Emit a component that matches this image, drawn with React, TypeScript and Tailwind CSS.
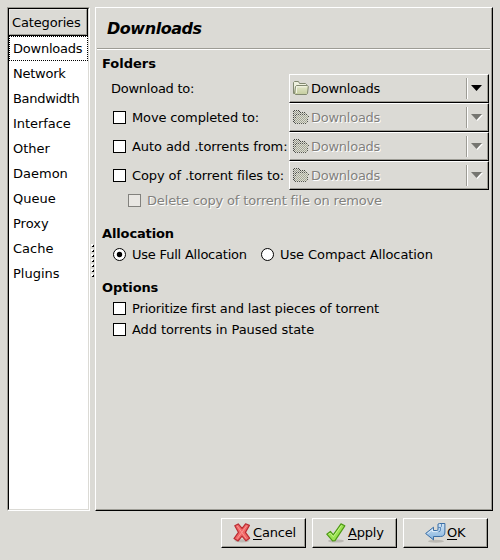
import React from "react";

const categories = [
  { name: "Downloads", spacing: "tracking-[-0.22px]" },
  { name: "Network", spacing: "tracking-[-0.25px]" },
  { name: "Bandwidth", spacing: "tracking-[-0.3px]" },
  { name: "Interface", spacing: "tracking-[-0.05px]" },
  { name: "Other", spacing: "tracking-normal" },
  { name: "Daemon", spacing: "tracking-normal" },
  { name: "Queue", spacing: "tracking-normal" },
  { name: "Proxy", spacing: "tracking-normal" },
  { name: "Cache", spacing: "tracking-normal" },
  { name: "Plugins", spacing: "tracking-normal" },
];

const embossed = "text-[#82817d] [text-shadow:1px_1px_0_#fff]";

function Check({ disabled = false }: { disabled?: boolean }) {
  return (
    <span
      className={
        "block h-[13px] w-[13px] shrink-0 border " +
        (disabled ? "border-[#82817d] bg-[#e9e7e3]" : "border-black bg-white")
      }
    />
  );
}

function Radio({ on = false }: { on?: boolean }) {
  return (
    <svg className="block shrink-0" width="13" height="13" viewBox="0 0 13 13">
      <circle cx="6.5" cy="6.5" r="6" fill="#fff" stroke="#000" />
      {on && <circle cx="6.5" cy="6.5" r="2.7" fill="#000" />}
    </svg>
  );
}

function Folder({ disabled }: { disabled: boolean }) {
  return (
    <svg className="block shrink-0" width="17" height="16" viewBox="0 0 17 16" shapeRendering={disabled ? "crispEdges" : "auto"}>
      <defs>
        <pattern id="stipple" width="2" height="2" patternUnits="userSpaceOnUse">
          <rect width="1" height="1" fill="#dbdad5" />
          <rect x="1" y="1" width="1" height="1" fill="#dbdad5" />
        </pattern>
        <linearGradient id="folderFace" x1="0" y1="0" x2="0" y2="1">
          <stop offset="0" stopColor="#e4e8cb" />
          <stop offset="1" stopColor="#c5cda0" />
        </linearGradient>
      </defs>
      <path d="M1.5 13.5v-11l1-1h4l1 2h6l1 1v9z" fill={disabled ? "#999c8b" : "#eef0df"} stroke={disabled ? "#444640" : "#818870"} />
      <path d="M3.5 6.5l1-1h11l.8 1-.8 7-1 1h-11l-1-1z" fill={disabled ? "#a6aa94" : "url(#folderFace)"} stroke={disabled ? "#555850" : "#818870"} />
      {!disabled && <path d="M4.5 13V6.8h10" fill="none" stroke="#f4f6e7" />}
      {disabled && <rect width="17" height="16" fill="url(#stipple)" />}
    </svg>
  );
}

function FolderButton({ disabled = false }: { disabled?: boolean }) {
  return (
    <div className="h-[29px] w-[200px] shrink-0 border border-t-white border-r-black border-b-black border-l-white">
      <div className="flex h-full items-center border-r border-b border-[#9d9c95] pl-[2px]">
        <Folder disabled={disabled} />
        <span className={"ml-[2px] flex-1 tracking-[-0.25px] " + (disabled ? embossed : "")}>Downloads</span>
        <span className="mr-[3px] h-[21px] w-[2px] border-r border-l border-r-white border-l-[#9d9c95]" />
        <svg className="mt-px mr-[4px] block" width="12" height="7" viewBox="0 0 12 7">
          {disabled && <path d="M1 1h11L6.5 7z" fill="#fff" />}
          <path d="M0 0h11L5.5 6z" fill={disabled ? "#757570" : "#000"} />
        </svg>
      </div>
    </div>
  );
}

function FolderRow({ label, spacing }: { label: string; spacing: string }) {
  return (
    <div className="flex h-[29px] items-center pl-[17px]">
      <Check />
      <span className={"ml-[6px] w-[157px] whitespace-nowrap " + spacing}>{label}</span>
      <FolderButton disabled />
    </div>
  );
}

function CancelIcon() {
  return (
    <svg className="block" width="18" height="20" viewBox="0 0 18 20">
      <ellipse cx="9" cy="17.8" rx="7.5" ry="1.6" fill="#bbb9b3" />
      <path d="M1.8 2.8l3.4-1.9 3.9 4.4 3.5-4.5 3.8 1.6-4 7 4.2 5.8-3.6 2.6-4-4.7-4 4.9L1 15.6l4.4-6.3z" fill="#f16767" stroke="#b92c32" strokeWidth="1.2" strokeLinejoin="round" />
      <path d="M4.1 2.8l9.2 12.8M13.7 2.7L4.2 15.7" fill="none" stroke="#fa9692" />
    </svg>
  );
}

function ApplyIcon() {
  return (
    <svg className="block" width="20" height="20" viewBox="0 0 20 20">
      <ellipse cx="10" cy="18" rx="8" ry="1.6" fill="#bbb9b3" />
      <path d="M.8 11.2l3.6-2.8 2.9 3.4L15 .9l3.8 1.9L9 17.6l-2.4.2z" fill="#9be352" stroke="#4e9a16" strokeWidth="1.2" strokeLinejoin="round" />
      <path d="M2.7 11.2l1.6-1.1 3 3.6L15.5 2.4" fill="none" stroke="#c5f58a" />
    </svg>
  );
}

function OkIcon() {
  return (
    <svg className="block" width="21" height="20" viewBox="0 0 21 20">
      <defs>
        <linearGradient id="arrowFace" x1="0" y1="0" x2="0" y2="1">
          <stop offset="0" stopColor="#d2e5f5" />
          <stop offset="1" stopColor="#83b2dd" />
        </linearGradient>
      </defs>
      <ellipse cx="11" cy="18.2" rx="8" ry="1.5" fill="#bbb9b3" />
      <path d="M.6 10.5L8.5 4.2v3.3h3.3q1.2 0 1.2-1.3v-1.7-3.4l1.5-.6h5.4V9q0 4.5-4.2 4.5H8.5v3.4z" fill="url(#arrowFace)" stroke="#3b6ea5" strokeLinejoin="round" />
      <path d="M13 4.5h2.5l1-1V.8M15.5 4.5V7q0 1.8-2 1.8" fill="none" stroke="#5684b8" strokeWidth=".9" />
      <path d="M2.5 10.5l5-3.9v2h5" fill="none" stroke="#ecf5fc" strokeWidth=".8" />
    </svg>
  );
}

function ActionButton({ icon, label, inset }: { icon: React.ReactNode; label: string; inset: string }) {
  return (
    <div className="h-[30px] w-[85px] border border-t-white border-r-black border-b-black border-l-white">
      <div className={"flex h-full items-center border-r border-b border-[#9d9c95] tracking-[-0.2px] " + inset}>
        {icon}
        <span>
          <span className="underline decoration-1 underline-offset-2">{label[0]}</span>
          {label.slice(1)}
        </span>
      </div>
    </div>
  );
}

export default function App() {
  return (
    <div className="h-[560px] w-[500px] overflow-hidden bg-[#dbdad5] pt-[7px] pl-[7px] font-['DejaVu_Sans',sans-serif] text-[13px] leading-[15px] text-black">
      <div className="flex h-[504px]">
        <div className="w-[83px] border border-t-[#9d9c95] border-r-white border-b-white border-l-[#9d9c95]">
          <div className="h-full border border-t-black border-r-[#dbdad5] border-b-[#dbdad5] border-l-black bg-white">
            <div className="h-[27px] border-r border-b border-black">
              <div className="flex h-full items-center border border-t-[#eceae7] border-r-[#9d9c95] border-b-[#9d9c95] border-l-[#eceae7] bg-[#dbdad5] pl-[2px] tracking-[-0.15px]">Categories</div>
            </div>
            {categories.map(({ name, spacing }, i) => (
              <div
                key={name}
                className={"flex h-[25px] items-center border pl-[3px] " + spacing + (i === 0 ? " border-dotted border-black" : " border-transparent")}
              >
                {name}
              </div>
            ))}
          </div>
        </div>

        <svg className="block shrink-0" width="5" height="504" viewBox="0 0 5 504" shapeRendering="crispEdges">
          {[0, 1, 2, 3, 4, 5, 6].map((i) => (
            <g key={i}>
              <rect x="1" y={237 + i * 5} width="2" height="2" fill="#fff" />
              <rect x="3" y={238 + i * 5} width="1" height="2" fill="#000" />
              <rect x="2" y={239 + i * 5} width="1" height="1" fill="#000" />
            </g>
          ))}
        </svg>

        <div className="w-[398px] border border-t-white border-r-black border-b-black border-l-white">
          <div className="h-full border-r border-b border-[#9d9c95]">
            <h1 className="flex h-[40px] items-center pl-[11px] text-[16px] font-bold tracking-[-0.45px] italic">Downloads</h1>
            <div className="mr-px ml-px h-[2px] border-t border-b border-t-[#9d9c95] border-b-white" />

            <h2 className="flex h-[24px] items-center pt-[3px] pl-[6px] font-bold">Folders</h2>
            <div className="flex h-[29px] items-center pl-[15px]">
              <span className="w-[178px] tracking-[-0.25px]">Download to:</span>
              <FolderButton />
            </div>
            <FolderRow label="Move completed to:" spacing="tracking-[-0.14px]" />
            <FolderRow label="Auto add .torrents from:" spacing="tracking-[-0.07px]" />
            <FolderRow label="Copy of .torrent files to:" spacing="tracking-[-0.1px]" />
            <div className={"flex h-[21px] items-center pl-[32px] " + embossed}>
              <Check disabled />
              <span className="ml-[6px] tracking-[-0.165px]">Delete copy of torrent file on remove</span>
            </div>

            <h2 className="mt-[12px] flex h-[21px] items-center pl-[6px] font-bold tracking-[-0.13px]">Allocation</h2>
            <div className="flex h-[21px] items-center pl-[17px]">
              <Radio on />
              <span className="ml-[6px] w-[129px] tracking-[-0.21px]">Use Full Allocation</span>
              <Radio />
              <span className="ml-[6px] tracking-[-0.09px]">Use Compact Allocation</span>
            </div>

            <h2 className="mt-[12px] flex h-[21px] items-center pl-[6px] font-bold tracking-[-0.1px]">Options</h2>
            <div className="flex h-[21px] items-center pl-[17px]">
              <Check />
              <span className="ml-[6px] tracking-[-0.165px]">Prioritize first and last pieces of torrent</span>
            </div>
            <div className="flex h-[21px] items-center pl-[17px]">
              <Check />
              <span className="ml-[6px] tracking-[-0.08px]">Add torrents in Paused state</span>
            </div>
          </div>
        </div>
      </div>

      <div className="mt-[7px] flex justify-end gap-[6px] pr-[12px]">
        <ActionButton icon={<CancelIcon />} label="Cancel" inset="gap-[2px] pl-[11px]" />
        <ActionButton icon={<ApplyIcon />} label="Apply" inset="gap-[2px] pl-[13px]" />
        <ActionButton icon={<OkIcon />} label="OK" inset="gap-px pl-[21px]" />
      </div>
    </div>
  );
}
